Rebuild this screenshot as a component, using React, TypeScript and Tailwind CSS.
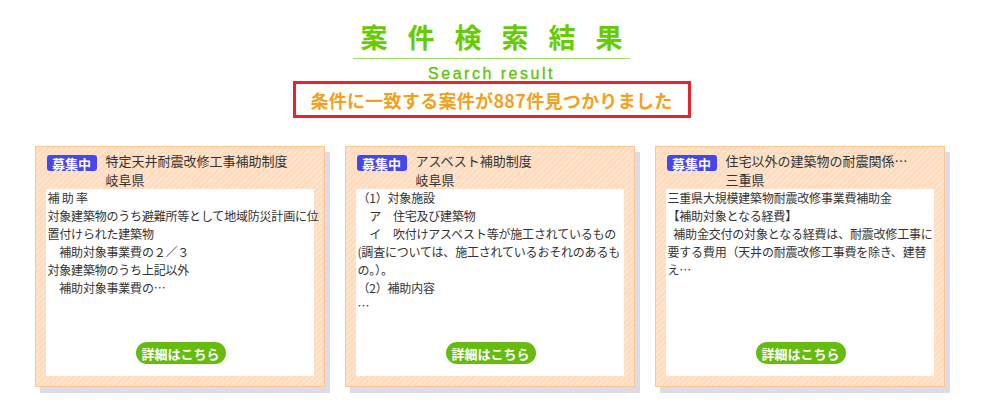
type Result = {
  title: string;
  area: string;
  lines: string[];
};

const results: Result[] = [
  {
    title: "特定天井耐震改修工事補助制度",
    area: "岐阜県",
    lines: [
      "補 助 率",
      "対象建築物のうち避難所等として地域防災計画に位",
      "置付けられた建築物",
      "　補助対象事業費の２／３",
      "対象建築物のうち上記以外",
      "　補助対象事業費の…",
    ],
  },
  {
    title: "アスベスト補助制度",
    area: "岐阜県",
    lines: [
      "（1）対象施設",
      "　ア　住宅及び建築物",
      "　イ　吹付けアスベスト等が施工されているもの",
      "(調査については、施工されているおそれのあるも",
      "の。）。",
      "（2）補助内容",
      "…",
    ],
  },
  {
    title: "住宅以外の建築物の耐震関係…",
    area: "三重県",
    lines: [
      "三重県大規模建築物耐震改修事業費補助金",
      "【補助対象となる経費】",
      "\u2002補助金交付の対象となる経費は、耐震改修工事に",
      "要する費用（天井の耐震改修工事費を除き、建替",
      "え…",
    ],
  },
];

export default function App() {
  return (
    <div className="h-[408px] w-[1000px] overflow-hidden bg-white font-['Noto_Sans_CJK_JP','Noto_Sans',sans-serif] text-[#333]">
      <div className="flex w-[983px] flex-col items-center pt-[20px]">
        <h1 className="h-[34px] pl-[20px] text-[27px] font-bold leading-[34px] tracking-[20px] text-[#66cc00]">
          案件検索結果
        </h1>
        <div className="mt-[4px] h-px w-[277px] bg-[#9fe060]" />
        <p className="mt-[7px] h-[15px] font-['Liberation_Sans',sans-serif] text-[16px] leading-[15px] tracking-[2.5px] text-[#5cc400] [-webkit-text-stroke:0.3px_#5cc400]">
          Search result
        </p>
        <div className="flex h-[37px] w-[398px] items-center justify-center border-[3px] border-[#e8232b]">
          <span className="text-[18px] font-bold leading-none tracking-[0.3px] text-[#f5a01a]">
            条件に一致する案件が887件見つかりました
          </span>
        </div>
        <div className="mt-[28px] flex gap-5 pr-[4px]">
          {results.map((r) => (
            <ResultCard key={r.title} result={r} />
          ))}
        </div>
      </div>
    </div>
  );
}

function ResultCard({ result }: { result: Result }) {
  return (
    <article className="flex h-[241px] w-[290px] flex-col border border-[#ffc58c] bg-[repeating-linear-gradient(135deg,#ffdbbd_0px,#ffdbbd_2px,#ffe3cc_2px,#ffe3cc_4px)] px-[10px] pb-[10px] shadow-[5px_6px_0_#dcdce8]">
      <div className="flex h-[42px] items-start gap-[9px] pl-px pt-[4px]">
        <span className="mt-[4px] flex h-[16px] w-[50px] shrink-0 items-center justify-center rounded-[3px] bg-[#4646ee] text-[13px] font-bold leading-none text-white">
          募集中
        </span>
        <div className="text-[13px] leading-[19px] text-[#333]">
          <p className="whitespace-nowrap">{result.title}</p>
          <p>{result.area}</p>
        </div>
      </div>
      <div className="flex flex-1 flex-col bg-white pl-[2px]">
        <div className="text-[12px] leading-[18px] tracking-[-0.2px] text-[#333]">
          {result.lines.map((line, i) => (
            <p key={i} className="whitespace-pre">
              {line}
            </p>
          ))}
        </div>
        <button className="mx-auto mb-[12px] mt-auto flex h-[22px] w-[90px] items-center justify-center rounded-full bg-[#66bb0e] text-[13px] font-bold leading-none text-white">
          詳細はこちら
        </button>
      </div>
    </article>
  );
}
